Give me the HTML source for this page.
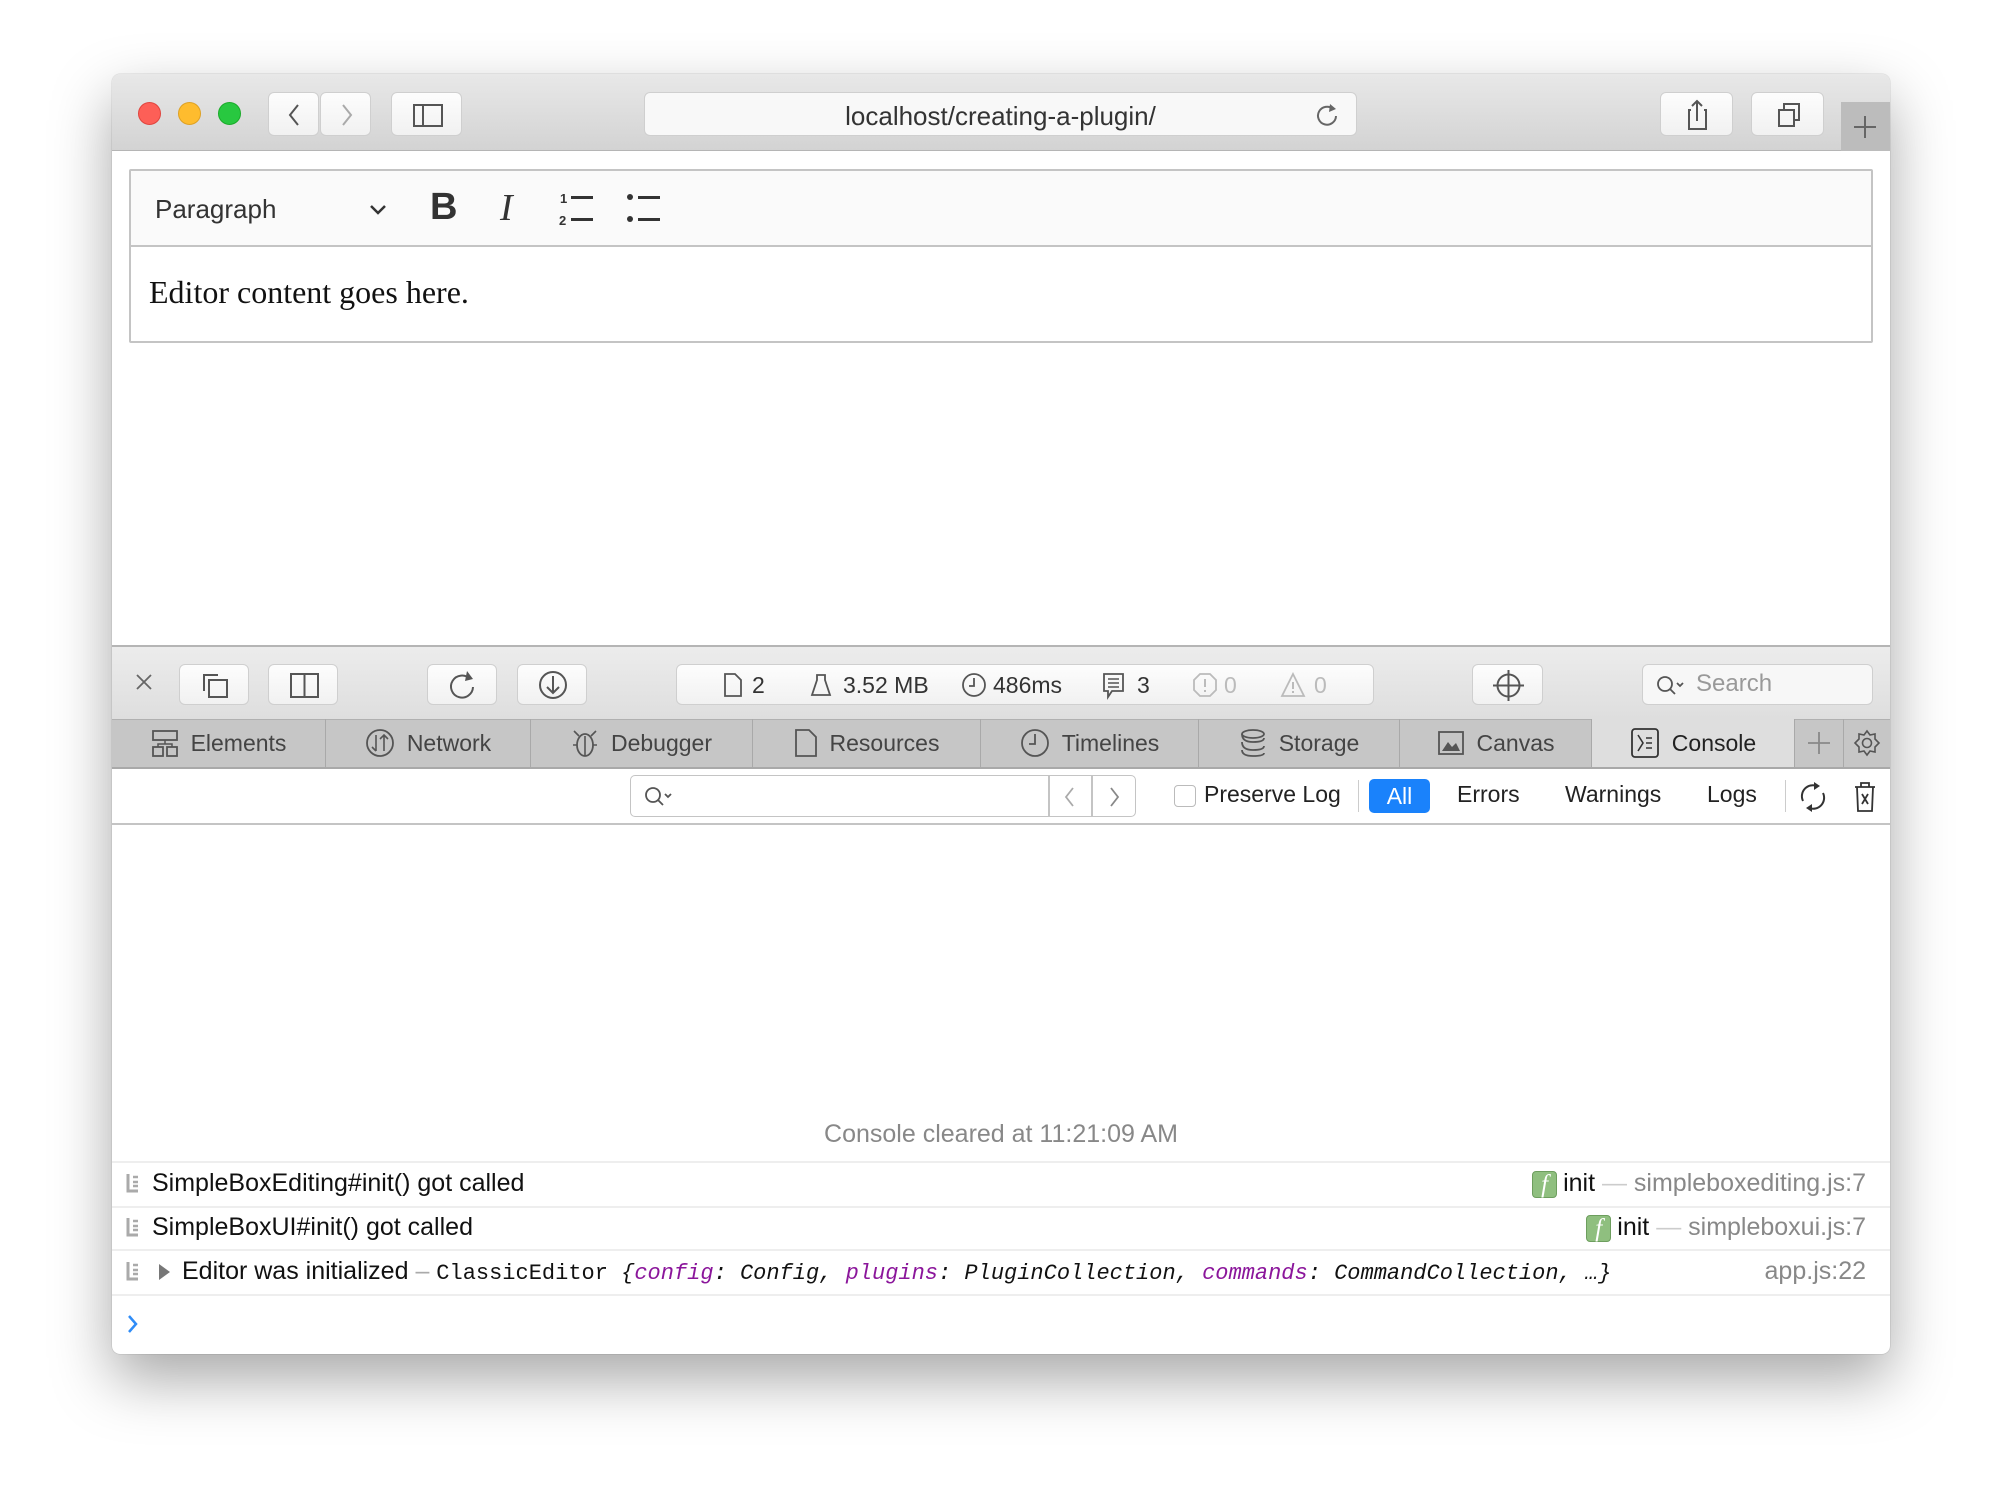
<!DOCTYPE html>
<html><head><meta charset="utf-8"><style>
*{box-sizing:border-box;margin:0;padding:0}
body{width:2002px;height:1502px;background:#fff;position:relative;overflow:hidden;font-family:"Liberation Sans",sans-serif;color:#222}
.a{position:absolute}
.win{left:112px;top:74px;width:1778px;height:1280px;border-radius:8px;background:#fff;box-shadow:0 25px 60px rgba(0,0,0,.35),0 0 1px rgba(0,0,0,.4);overflow:hidden}
.btn{position:absolute;background:linear-gradient(#fdfdfd,#f1f1f1);border:1px solid #cfcfcf;border-radius:6px}
.t{position:absolute;white-space:nowrap}
.tab{position:absolute;top:645px;height:48px;border-right:1px solid #a9a9a9;font-size:23px;color:#444;display:flex;align-items:center;justify-content:center;gap:12px}
.sep{position:absolute;left:0;width:1778px;height:2px;background:#eee}
.row{position:absolute;font-size:25px;color:#111;white-space:nowrap}
</style></head><body>
<div class="a win">
 <div class="a" style="left:0;top:0;width:1778px;height:77px;background:linear-gradient(#e8e8e8,#d3d3d3);border-bottom:1px solid #b5b5b5"></div>
 <div class="a" style="left:26px;top:28px;width:23px;height:23px;border-radius:50%;background:#fd5f57;border:1px solid #e0443e"></div>
 <div class="a" style="left:66px;top:28px;width:23px;height:23px;border-radius:50%;background:#febc2e;border:1px solid #dea123"></div>
 <div class="a" style="left:106px;top:28px;width:23px;height:23px;border-radius:50%;background:#28c840;border:1px solid #1aab29"></div>
 <div class="btn" style="left:156px;top:18px;width:51px;height:44px"><svg width="51" height="44"><path d="M29 12 L21 22 L29 32" fill="none" stroke="#555" stroke-width="2"/></svg></div>
 <div class="btn" style="left:208px;top:18px;width:51px;height:44px"><svg width="51" height="44"><path d="M22 12 L30 22 L22 32" fill="none" stroke="#aaa" stroke-width="2"/></svg></div>
 <div class="btn" style="left:279px;top:18px;width:71px;height:44px"><svg width="71" height="44"><rect x="22" y="12" width="28" height="21" fill="none" stroke="#555" stroke-width="2"/><line x1="31" y1="12" x2="31" y2="33" stroke="#555" stroke-width="2"/></svg></div>
 <div class="btn" style="left:532px;top:18px;width:713px;height:44px;background:#f8f8f8"></div>
 <div class="t" style="left:532px;top:27px;width:713px;text-align:center;font-size:26px;color:#333">localhost/creating-a-plugin/</div>
 <svg class="a" style="left:1200px;top:26px" width="30" height="30"><path d="M21 9 A9 9 0 1 0 24 16" fill="none" stroke="#666" stroke-width="2"/><path d="M18 4 L24 9 L17 12Z" fill="#666"/></svg>
 <div class="btn" style="left:1548px;top:18px;width:73px;height:44px"><svg width="73" height="44"><path d="M30 17 H28 V36 H45 V17 H43 M36 28 V8 M31 13 L36 8 L41 13" fill="none" stroke="#555" stroke-width="2"/></svg></div>
 <div class="btn" style="left:1639px;top:18px;width:73px;height:44px"><svg width="73" height="44"><rect x="27" y="17" width="15" height="16" fill="none" stroke="#555" stroke-width="2"/><path d="M32 17 V11 H47 V27 H42" fill="none" stroke="#555" stroke-width="2"/></svg></div>
 <div class="a" style="left:1729px;top:28px;width:49px;height:49px;background:#bcbcbc"><svg width="49" height="49"><path d="M24 14 V36 M13 25 H35" stroke="#666" stroke-width="2"/></svg></div>

 <div class="a" style="left:17px;top:95px;width:1744px;height:174px;border:2px solid #c4c4c4;border-radius:2px"></div>
 <div class="a" style="left:19px;top:97px;width:1740px;height:76px;background:#fafafa;border-bottom:2px solid #c4c4c4"></div>
 <div class="t" style="left:43px;top:120px;font-size:26px;color:#333">Paragraph</div>
 <svg class="a" style="left:255px;top:126px" width="22" height="20"><path d="M4 6 L11 13 L18 6" fill="none" stroke="#333" stroke-width="2.5"/></svg>
 <div class="t" style="left:318px;top:112px;font-size:38px;font-weight:bold;color:#333">B</div>
 <div class="t" style="left:388px;top:112px;font-size:38px;font-style:italic;font-family:'Liberation Serif',serif;color:#333">I</div>
 <svg class="a" style="left:446px;top:115px" width="44" height="40"><text x="2" y="14" font-size="13" font-family="Liberation Sans" font-weight="bold" fill="#333">1</text><text x="1" y="36" font-size="13" font-family="Liberation Sans" font-weight="bold" fill="#333">2</text><rect x="13" y="7" width="22" height="3" fill="#333"/><rect x="13" y="29" width="22" height="3" fill="#333"/></svg>
 <svg class="a" style="left:514px;top:115px" width="44" height="40"><circle cx="4" cy="8" r="3" fill="#333"/><circle cx="4" cy="30" r="3" fill="#333"/><rect x="12" y="7" width="22" height="3" fill="#333"/><rect x="12" y="29" width="22" height="3" fill="#333"/></svg>
 <div class="t" style="left:37px;top:200px;font-size:32px;font-family:'Liberation Serif',serif;color:#111">Editor content goes here.</div>

 <div class="a" style="left:0;top:571px;width:1778px;height:74px;background:linear-gradient(#ececec,#dedede);border-top:2px solid #b5b5b5"></div>
 <svg class="a" style="left:22px;top:598px" width="20" height="20"><path d="M3 3 L17 17 M17 3 L3 17" stroke="#666" stroke-width="1.8"/></svg>
 <div class="btn" style="left:67px;top:590px;width:70px;height:41px"><svg width="70" height="41"><path d="M24 26 V10 H38" fill="none" stroke="#555" stroke-width="2"/><rect x="29" y="15" width="18" height="17" fill="none" stroke="#555" stroke-width="2"/></svg></div>
 <div class="btn" style="left:156px;top:590px;width:70px;height:41px"><svg width="70" height="41"><rect x="22" y="9" width="27" height="23" fill="none" stroke="#555" stroke-width="2"/><line x1="35.5" y1="9" x2="35.5" y2="32" stroke="#555" stroke-width="2"/></svg></div>
 <div class="btn" style="left:315px;top:590px;width:70px;height:41px"><svg width="70" height="41"><path d="M42 14 A11 11 0 1 0 45 22" fill="none" stroke="#555" stroke-width="2"/><path d="M39 6 L45 14 L37 16Z" fill="#555"/></svg></div>
 <div class="btn" style="left:405px;top:590px;width:70px;height:41px"><svg width="70" height="41"><circle cx="35" cy="20" r="13" fill="none" stroke="#555" stroke-width="2"/><path d="M35 11 V28 M29 22 L35 28 L41 22" fill="none" stroke="#555" stroke-width="2"/></svg></div>
 <div class="btn" style="left:564px;top:590px;width:698px;height:41px"></div>
 <svg class="a" style="left:610px;top:598px" width="22" height="26"><path d="M3 2 H13 L19 8 V24 H3Z" fill="none" stroke="#555" stroke-width="1.8"/></svg>
 <div class="t" style="left:640px;top:598px;font-size:23px;color:#333">2</div>
 <svg class="a" style="left:697px;top:598px" width="24" height="26"><path d="M8 8 V3 H16 V8 L21 23 H3Z" fill="none" stroke="#555" stroke-width="1.8"/></svg>
 <div class="t" style="left:731px;top:598px;font-size:23px;color:#333">3.52 MB</div>
 <svg class="a" style="left:849px;top:598px" width="26" height="26"><circle cx="13" cy="13" r="11" fill="none" stroke="#555" stroke-width="1.8"/><path d="M13 6 V14 H8" fill="none" stroke="#555" stroke-width="1.8"/></svg>
 <div class="t" style="left:881px;top:598px;font-size:23px;color:#333">486ms</div>
 <svg class="a" style="left:990px;top:598px" width="24" height="28"><path d="M2 2 H21 V19 H10 L6 25 V19 H2Z" fill="none" stroke="#555" stroke-width="1.8"/><path d="M6 7 H17 M6 11 H17 M6 15 H17" stroke="#555" stroke-width="1.5"/></svg>
 <div class="t" style="left:1025px;top:598px;font-size:23px;color:#333">3</div>
 <svg class="a" style="left:1080px;top:598px" width="26" height="26"><path d="M8 2 H18 L24 8 V18 L18 24 H8 L2 18 V8Z" fill="none" stroke="#bbb" stroke-width="1.8"/><path d="M13 7 V15 M13 18 V20" stroke="#bbb" stroke-width="2"/></svg>
 <div class="t" style="left:1112px;top:598px;font-size:23px;color:#bbb">0</div>
 <svg class="a" style="left:1168px;top:598px" width="26" height="26"><path d="M13 2 L24 24 H2Z" fill="none" stroke="#bbb" stroke-width="1.8"/><path d="M13 10 V17 M13 19 V21" stroke="#bbb" stroke-width="2"/></svg>
 <div class="t" style="left:1202px;top:598px;font-size:23px;color:#bbb">0</div>
 <div class="btn" style="left:1360px;top:590px;width:71px;height:41px"><svg width="71" height="41"><circle cx="35.5" cy="20.5" r="11" fill="none" stroke="#555" stroke-width="2"/><path d="M35.5 5 V36 M20 20.5 H51" stroke="#555" stroke-width="2"/></svg></div>
 <div class="btn" style="left:1530px;top:590px;width:231px;height:41px;background:#f7f7f7"></div>
 <svg class="a" style="left:1543px;top:600px" width="30" height="24"><circle cx="10" cy="10" r="7" fill="none" stroke="#555" stroke-width="1.8"/><path d="M15 15 L20 20 M22 9 L25 12 L28 9" fill="none" stroke="#555" stroke-width="1.8"/></svg>
 <div class="t" style="left:1584px;top:596px;font-size:24px;color:#999">Search</div>

 <div class="a" style="left:0;top:645px;width:1778px;height:50px;background:#c6c6c6;border-top:1px solid #b0b0b0;border-bottom:2px solid #a9a9a9"></div>
 <div class="tab" style="left:0;width:214px"><svg width="28" height="28"><rect x="2" y="2" width="24" height="9" fill="none" stroke="#555" stroke-width="1.8"/><rect x="2" y="18" width="10" height="9" fill="none" stroke="#555" stroke-width="1.8"/><rect x="16" y="18" width="10" height="9" fill="none" stroke="#555" stroke-width="1.8"/><path d="M14 11 V15 M7 18 V15 H21 V18" fill="none" stroke="#555" stroke-width="1.5"/></svg>Elements</div>
 <div class="tab" style="left:214px;width:205px"><svg width="30" height="30"><circle cx="15" cy="15" r="13" fill="none" stroke="#555" stroke-width="1.8"/><path d="M11 7 V23 M7 19 L11 23 M19 23 V7 M15 11 L19 7 L23 11" fill="none" stroke="#555" stroke-width="1.6"/></svg>Network</div>
 <div class="tab" style="left:419px;width:222px"><svg width="28" height="30"><ellipse cx="14" cy="17" rx="8" ry="11" fill="none" stroke="#555" stroke-width="1.8"/><path d="M14 8 V28 M3 3 L8 8 M25 3 L20 8 M2 17 H6 M22 17 H26" stroke="#555" stroke-width="1.6"/></svg>Debugger</div>
 <div class="tab" style="left:641px;width:228px"><svg width="24" height="30"><path d="M2 2 H15 L22 9 V28 H2Z" fill="none" stroke="#555" stroke-width="1.8"/></svg>Resources</div>
 <div class="tab" style="left:869px;width:218px"><svg width="30" height="30"><circle cx="15" cy="15" r="13" fill="none" stroke="#555" stroke-width="1.8"/><path d="M15 6 V16 H9" fill="none" stroke="#555" stroke-width="1.8"/></svg>Timelines</div>
 <div class="tab" style="left:1087px;width:201px"><svg width="28" height="30"><ellipse cx="14" cy="6" rx="11" ry="4" fill="none" stroke="#555" stroke-width="1.8"/><path d="M3 6 Q3 14 14 14 Q25 14 25 10 M3 14 Q3 22 14 22 Q25 22 25 18 M3 22 Q3 28 14 28 Q25 28 25 25" fill="none" stroke="#555" stroke-width="1.8"/></svg>Storage</div>
 <div class="tab" style="left:1288px;width:192px"><svg width="28" height="26"><rect x="2" y="2" width="24" height="22" fill="none" stroke="#555" stroke-width="1.8"/><path d="M5 21 L11 12 L15 17 L19 13 L23 21Z" fill="#555"/></svg>Canvas</div>
 <div class="tab" style="left:1480px;width:203px;background:#dedede;color:#222"><svg width="30" height="32"><rect x="2" y="2" width="26" height="28" rx="3" fill="none" stroke="#333" stroke-width="1.8"/><path d="M8 8 L13 16 L8 24 M16 11 H22 M16 16 H22 M16 21 H22" fill="none" stroke="#333" stroke-width="1.6"/></svg>Console</div>
 <div class="tab" style="left:1683px;width:49px"><svg width="26" height="26"><path d="M13 2 V24 M2 13 H24" stroke="#888" stroke-width="1.8"/></svg></div>
 <div class="tab" style="left:1732px;width:46px;border:none"><svg width="28" height="28"><circle cx="14" cy="14" r="4.5" fill="none" stroke="#555" stroke-width="1.6"/><path d="M14 2 L17 6 L22 5 L22 10 L26 14 L22 18 L22 23 L17 22 L14 26 L11 22 L6 23 L6 18 L2 14 L6 10 L6 5 L11 6Z" fill="none" stroke="#555" stroke-width="1.6"/></svg></div>

 <div class="a" style="left:0;top:749px;width:1778px;height:2px;background:#c4c4c4"></div>
 <div class="a" style="left:518px;top:701px;width:506px;height:42px;border:1.5px solid #c4c4c4;border-radius:5px"></div>
 <div class="a" style="left:936px;top:701px;width:1.5px;height:42px;background:#c4c4c4"></div>
 <div class="a" style="left:979px;top:701px;width:1.5px;height:42px;background:#c4c4c4"></div>
 <svg class="a" style="left:531px;top:711px" width="30" height="24"><circle cx="10" cy="10" r="7" fill="none" stroke="#555" stroke-width="1.8"/><path d="M15 15 L20 20 M22 9 L25 12 L28 9" fill="none" stroke="#555" stroke-width="1.8"/></svg>
 <svg class="a" style="left:947px;top:710px" width="22" height="26"><path d="M14 4 L7 13 L14 22" fill="none" stroke="#aaa" stroke-width="1.8"/></svg>
 <svg class="a" style="left:991px;top:710px" width="22" height="26"><path d="M8 4 L15 13 L8 22" fill="none" stroke="#888" stroke-width="1.8"/></svg>
 <div class="a" style="left:1062px;top:711px;width:22px;height:22px;border:1.5px solid #bbb;border-radius:4px;background:#fff"></div>
 <div class="t" style="left:1092px;top:707px;font-size:23px;color:#222">Preserve Log</div>
 <div class="a" style="left:1246px;top:706px;width:1px;height:32px;background:#ccc"></div>
 <div class="a" style="left:1257px;top:705px;width:61px;height:34px;background:#1a82fb;border-radius:5px;color:#fff;font-size:23px;text-align:center;line-height:34px">All</div>
 <div class="t" style="left:1345px;top:707px;font-size:23px">Errors</div>
 <div class="t" style="left:1453px;top:707px;font-size:23px">Warnings</div>
 <div class="t" style="left:1595px;top:707px;font-size:23px">Logs</div>
 <div class="a" style="left:1673px;top:706px;width:1px;height:32px;background:#ccc"></div>
 <svg class="a" style="left:1685px;top:707px" width="32" height="32"><path d="M6 20 A11 11 0 0 1 20 5 M26 12 A11 11 0 0 1 12 27" fill="none" stroke="#333" stroke-width="2"/><path d="M17 1 L23 5 L17 9Z M15 31 L9 27 L15 23Z" fill="#333"/></svg>
 <svg class="a" style="left:1741px;top:707px" width="24" height="32"><path d="M2 6 H22 M8 6 V2 H16 V6 M4 6 L5 30 H19 L20 6 M9 13 L15 23 M15 13 L9 23" fill="none" stroke="#333" stroke-width="1.8"/></svg>

 <div class="t" style="left:0;width:1778px;text-align:center;top:1046px;font-size:25px;color:#888">Console cleared at 11:21:09 AM</div>
 <div class="sep" style="top:1087px"></div>
 <div class="sep" style="top:1132px"></div>
 <div class="sep" style="top:1175px"></div>
 <div class="sep" style="top:1220px"></div>
 <svg class="a" style="left:14px;top:1099px" width="14" height="20"><path d="M2 1 V18 H12" fill="none" stroke="#aaa" stroke-width="3"/><path d="M7 4 H12 M7 9 H12 M7 13 H12" stroke="#aaa" stroke-width="2.5"/></svg>
 <svg class="a" style="left:14px;top:1143px" width="14" height="20"><path d="M2 1 V18 H12" fill="none" stroke="#aaa" stroke-width="3"/><path d="M7 4 H12 M7 9 H12 M7 13 H12" stroke="#aaa" stroke-width="2.5"/></svg>
 <svg class="a" style="left:14px;top:1187px" width="14" height="20"><path d="M2 1 V18 H12" fill="none" stroke="#aaa" stroke-width="3"/><path d="M7 4 H12 M7 9 H12 M7 13 H12" stroke="#aaa" stroke-width="2.5"/></svg>
 <div class="row" style="left:40px;top:1095px">SimpleBoxEditing#init() got called</div>
 <div class="row" style="left:40px;top:1139px">SimpleBoxUI#init() got called</div>
 <svg class="a" style="left:45px;top:1189px" width="14" height="18"><path d="M2 1 L13 9 L2 17Z" fill="#777"/></svg>
 <div class="row" style="left:70px;top:1183px">Editor was initialized <span style="color:#aaa">–</span> <span style="font-family:'Liberation Mono',monospace;font-size:22px">ClassicEditor <i>{<span style="color:#8b169b">config</span>: Config, <span style="color:#8b169b">plugins</span>: PluginCollection, <span style="color:#8b169b">commands</span>: CommandCollection, …}</i></span></div>
 <div class="row" style="right:24px;top:1095px;color:#888"><span style="display:inline-block;width:25px;height:27px;background:#8fbf7f;border:1px solid #6d9e5e;border-radius:4px;color:#fff;font-style:italic;font-family:'Liberation Serif',serif;text-align:center;line-height:26px;vertical-align:middle;margin-right:6px">f</span><span style="color:#111">init</span> <span style="color:#ccc">—</span> simpleboxediting.js:7</div>
 <div class="row" style="right:24px;top:1139px;color:#888"><span style="display:inline-block;width:25px;height:27px;background:#8fbf7f;border:1px solid #6d9e5e;border-radius:4px;color:#fff;font-style:italic;font-family:'Liberation Serif',serif;text-align:center;line-height:26px;vertical-align:middle;margin-right:6px">f</span><span style="color:#111">init</span> <span style="color:#ccc">—</span> simpleboxui.js:7</div>
 <div class="row" style="right:24px;top:1183px;color:#888">app.js:22</div>
 <svg class="a" style="left:14px;top:1239px" width="14" height="22"><path d="M3 3 L10 11 L3 19" fill="none" stroke="#2f8cf7" stroke-width="2.5"/></svg>
</div>
</body></html>
